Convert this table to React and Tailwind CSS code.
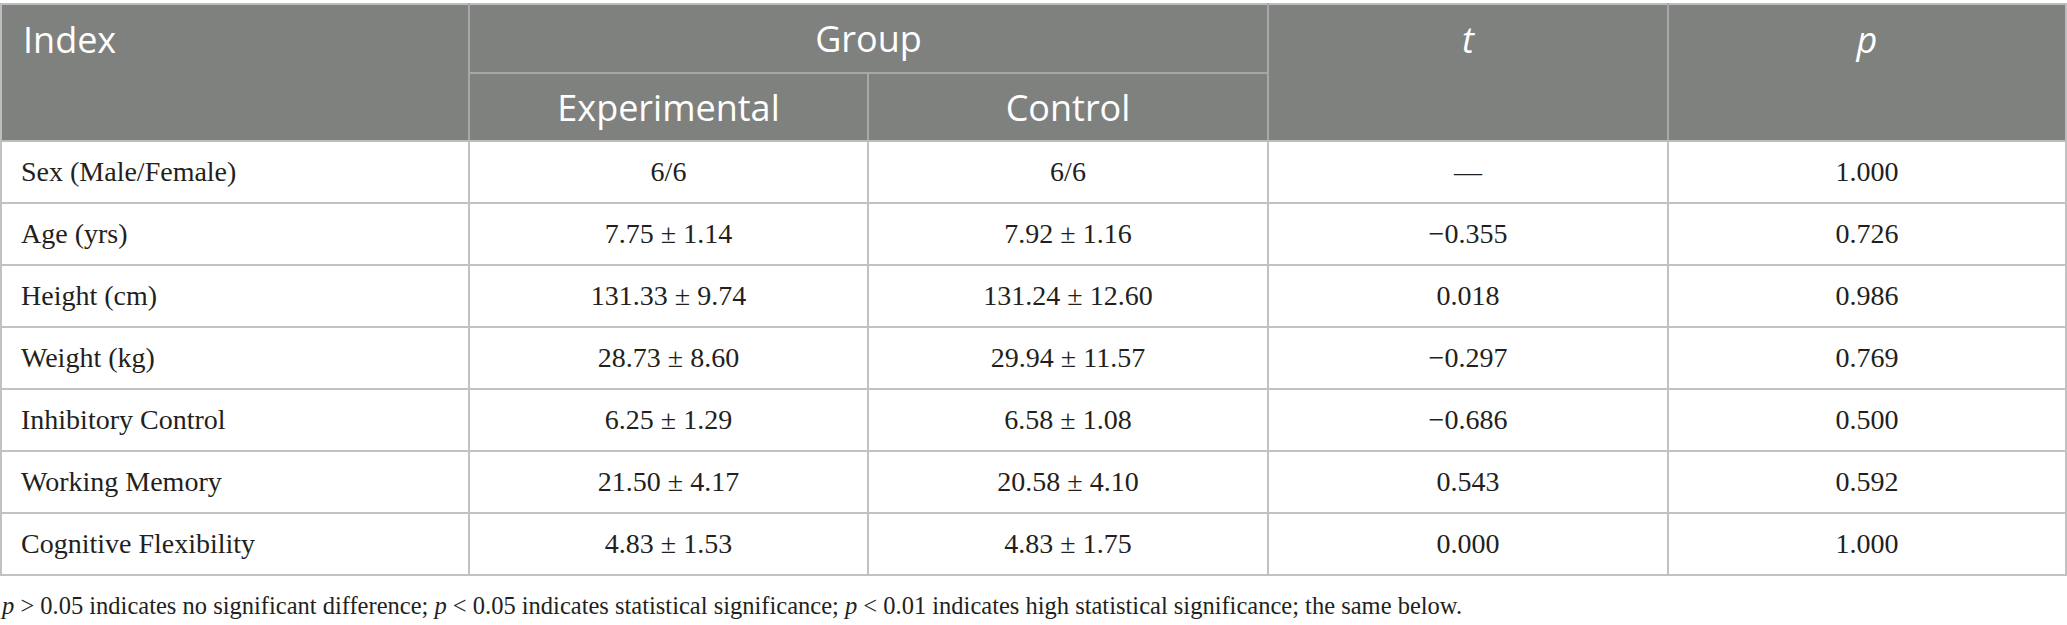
import React from 'react';

const rows = [
  { label: 'Sex (Male/Female)', exp: '6/6', ctrl: '6/6', t: '—', p: '1.000' },
  { label: 'Age (yrs)', exp: '7.75 ± 1.14', ctrl: '7.92 ± 1.16', t: '−0.355', p: '0.726' },
  { label: 'Height (cm)', exp: '131.33 ± 9.74', ctrl: '131.24 ± 12.60', t: '0.018', p: '0.986' },
  { label: 'Weight (kg)', exp: '28.73 ± 8.60', ctrl: '29.94 ± 11.57', t: '−0.297', p: '0.769' },
  { label: 'Inhibitory Control', exp: '6.25 ± 1.29', ctrl: '6.58 ± 1.08', t: '−0.686', p: '0.500' },
  { label: 'Working Memory', exp: '21.50 ± 4.17', ctrl: '20.58 ± 4.10', t: '0.543', p: '0.592' },
  { label: 'Cognitive Flexibility', exp: '4.83 ± 1.53', ctrl: '4.83 ± 1.75', t: '0.000', p: '1.000' },
];

const serif = "font-['Liberation_Serif','Times_New_Roman',serif]";

const App = () => {
  return (
    <div className="w-[2067px] bg-white pt-[3px] text-[#231f20]">
      <table className="w-full table-fixed border-collapse">
        <colgroup>
          <col className="w-[468px]" />
          <col className="w-[399px]" />
          <col className="w-[400px]" />
          <col className="w-[400px]" />
          <col />
        </colgroup>
        <thead className="bg-[#7f817f] text-white font-['Open_Sans',sans-serif] text-[36px] font-normal leading-[43px]">
          <tr className="h-[69px]">
            <th rowSpan={2} className="border-2 border-[#bdbdbd] border-r-[#a6a7a6] border-b-[#bdbdbd] text-left align-top pl-[21px] pt-[13px] font-normal">
              Index
            </th>
            <th colSpan={2} className="border-2 border-[#bdbdbd] border-x-[#a6a7a6] border-b-[#a6a7a6] text-center align-middle font-normal">
              Group
            </th>
            <th rowSpan={2} className="border-2 border-[#bdbdbd] border-x-[#a6a7a6] text-center align-top pt-[13px] font-normal italic">
              t
            </th>
            <th rowSpan={2} className="border-2 border-[#bdbdbd] border-l-[#a6a7a6] text-center align-top pt-[13px] font-normal italic">
              p
            </th>
          </tr>
          <tr className="h-[68px]">
            <th className="border-2 border-[#a6a7a6] border-b-[#bdbdbd] text-center align-middle font-normal">
              Experimental
            </th>
            <th className="border-2 border-[#a6a7a6] border-b-[#bdbdbd] text-center align-middle font-normal">
              Control
            </th>
          </tr>
        </thead>
        <tbody className={`${serif} text-[28px] leading-[32px]`}>
          {rows.map((r) => (
            <tr key={r.label} className="h-[62px]">
              <td className="border-2 border-[#c2c2c2] pl-[19px] text-left align-middle">{r.label}</td>
              <td className="border-2 border-[#c2c2c2] text-center align-middle">{r.exp}</td>
              <td className="border-2 border-[#c2c2c2] text-center align-middle">{r.ctrl}</td>
              <td className="border-2 border-[#c2c2c2] text-center align-middle">{r.t}</td>
              <td className="border-2 border-[#c2c2c2] text-center align-middle">{r.p}</td>
            </tr>
          ))}
        </tbody>
      </table>
      <p className={`${serif} mt-[15px] pl-[2px] text-[24.5px] leading-[30px]`}>
        <i>p</i> &gt; 0.05 indicates no significant difference; <i>p</i> &lt; 0.05 indicates statistical significance;{' '}
        <i>p</i> &lt; 0.01 indicates high statistical significance; the same below.
      </p>
    </div>
  );
};

export default App;
